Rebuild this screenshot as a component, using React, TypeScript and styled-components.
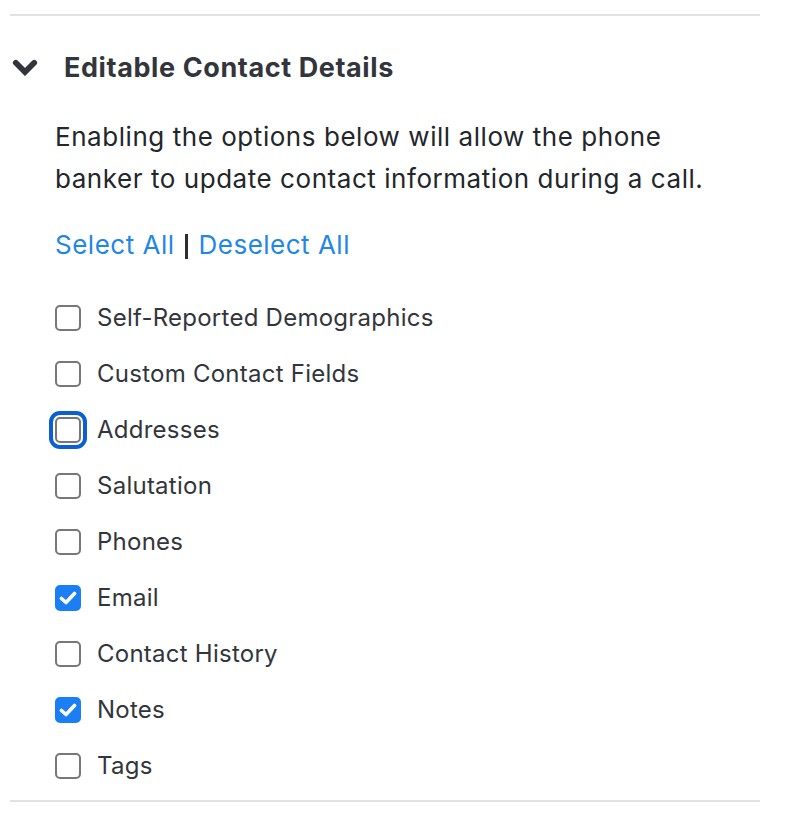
import React, { FC, useState } from "react";
import styled, { createGlobalStyle } from "styled-components";

const GlobalStyle = createGlobalStyle`
  body {
    margin: 0;
    background: #ffffff;
    font-family: Inter, "Noto Sans", "Liberation Sans", sans-serif;
  }
`;

// Collapsible panel
const Panel = styled.section`
  width: 750px;
  margin: 14px 0 0 10px;
  border-top: 2px solid #dfe3e8;
  border-bottom: 2px solid #dfe3e8;
`;

const Header = styled.div`
  display: flex;
  align-items: center;
  height: 44px;
  margin-top: 29px;
`;

const Chevron = styled.svg`
  margin-left: 2px;
  width: 26px;
  height: 17px;
  flex-shrink: 0;
`;

const Title = styled.h2`
  margin: 0 0 0 26px;
  font-size: 27px;
  font-weight: 700;
  letter-spacing: 0.6px;
  color: #32363c;
`;

const Body = styled.div`
  padding: 0 0 6px 45px;
`;

const Description = styled.p`
  margin: 27px 0 0;
  font-size: 26px;
  line-height: 42px;
  letter-spacing: 0.55px;
  color: #23262a;
`;

const LinkRow = styled.div`
  display: flex;
  align-items: center;
  margin-top: 24px;
  font-size: 26px;
  line-height: 42px;
  letter-spacing: 0.5px;
  color: #23262a;
`;

const TextLink = styled.a`
  color: #1f87e6;
  text-decoration: none;
  cursor: pointer;
`;

const Divider = styled.span`
  flex-shrink: 0;
  width: 3px;
  height: 25px;
  margin: 2px 11px 0 10px;
  background: #2b2e33;
`;

const OptionList = styled.ul`
  list-style: none;
  margin: 24px 0 0;
  padding: 0;
`;

const OptionRow = styled.li`
  display: flex;
  align-items: center;
  height: 56px;
`;

const Box = styled.span<{ $checked: boolean; $focused: boolean }>`
  box-sizing: border-box;
  width: 26px;
  height: 26px;
  flex-shrink: 0;
  border-radius: 5px;
  border: 2px solid ${(p) => (p.$checked ? "#1a7ef4" : "#777777")};
  background: ${(p) => (p.$checked ? "#1a7ef4" : "#ffffff")};
  display: flex;
  align-items: center;
  justify-content: center;
  box-shadow: ${(p) =>
    p.$focused ? "0 0 0 2px #ffffff, 0 0 0 6px #0a5fd2" : "none"};
`;

const Label = styled.span`
  margin-left: 16px;
  margin-top: -2px;
  font-size: 24px;
  letter-spacing: 0.25px;
  color: #32363c;
`;

interface IOption {
  label: string;
  checked: boolean;
}

const initialOptions: IOption[] = [
  { label: "Self-Reported Demographics", checked: false },
  { label: "Custom Contact Fields", checked: false },
  { label: "Addresses", checked: false },
  { label: "Salutation", checked: false },
  { label: "Phones", checked: false },
  { label: "Email", checked: true },
  { label: "Contact History", checked: false },
  { label: "Notes", checked: true },
  { label: "Tags", checked: false },
];

const Check: FC = () => (
  <svg width="18" height="14" viewBox="0 0 18 14">
    <path
      d="M2.5 7.5 L7 11.5 L15.5 2.5"
      fill="none"
      stroke="#ffffff"
      strokeWidth="3.6"
      strokeLinecap="round"
      strokeLinejoin="round"
    />
  </svg>
);

const App: FC = () => {
  const [options, setOptions] = useState(initialOptions);
  const focused = "Addresses";

  const setAll = (value: boolean) =>
    setOptions(options.map((o) => ({ ...o, checked: value })));

  const toggle = (label: string) =>
    setOptions(
      options.map((o) => (o.label === label ? { ...o, checked: !o.checked } : o))
    );

  return (
    <>
      <GlobalStyle />
      <Panel>
        <Header>
          <Chevron viewBox="0 0 26 17">
            <path
              d="M3.8 3.8 L13 13 L22.2 3.8"
              fill="none"
              stroke="#32363c"
              strokeWidth="5.8"
              strokeLinecap="round"
              strokeLinejoin="miter"
            />
          </Chevron>
          <Title>Editable Contact Details</Title>
        </Header>
        <Body>
          <Description>
            Enabling the options below will allow the phone
            <br />
            banker to update contact information during a call.
          </Description>
          <LinkRow>
            <TextLink onClick={() => setAll(true)}>Select All</TextLink>
            <Divider />
            <TextLink onClick={() => setAll(false)}>Deselect All</TextLink>
          </LinkRow>
          <OptionList>
            {options.map((o) => (
              <OptionRow key={o.label} onClick={() => toggle(o.label)}>
                <Box $checked={o.checked} $focused={o.label === focused}>
                  {o.checked && <Check />}
                </Box>
                <Label>{o.label}</Label>
              </OptionRow>
            ))}
          </OptionList>
        </Body>
      </Panel>
    </>
  );
};

export default App;
